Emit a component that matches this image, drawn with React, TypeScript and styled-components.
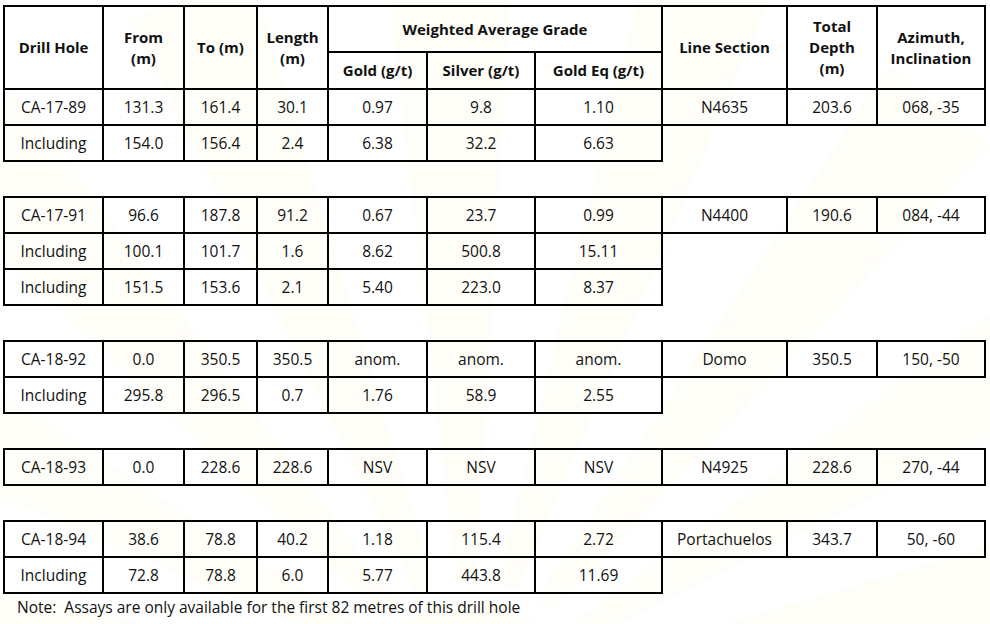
import React from "react";
import styled, { createGlobalStyle } from "styled-components";

const GlobalStyle = createGlobalStyle`
  html, body {
    margin: 0;
    padding: 0;
    background: #ffffff;
  }
  body {
    font-family: "Open Sans", "Noto Sans", "Liberation Sans", sans-serif;
    color: #111111;
  }
`;

type Row = string[];

interface Group {
  main: Row;
  including: Row[];
}

const groups: Group[] = [
  {
    main: ["CA-17-89", "131.3", "161.4", "30.1", "0.97", "9.8", "1.10", "N4635", "203.6", "068, -35"],
    including: [["Including", "154.0", "156.4", "2.4", "6.38", "32.2", "6.63"]],
  },
  {
    main: ["CA-17-91", "96.6", "187.8", "91.2", "0.67", "23.7", "0.99", "N4400", "190.6", "084, -44"],
    including: [
      ["Including", "100.1", "101.7", "1.6", "8.62", "500.8", "15.11"],
      ["Including", "151.5", "153.6", "2.1", "5.40", "223.0", "8.37"],
    ],
  },
  {
    main: ["CA-18-92", "0.0", "350.5", "350.5", "anom.", "anom.", "anom.", "Domo", "350.5", "150, -50"],
    including: [["Including", "295.8", "296.5", "0.7", "1.76", "58.9", "2.55"]],
  },
  {
    main: ["CA-18-93", "0.0", "228.6", "228.6", "NSV", "NSV", "NSV", "N4925", "228.6", "270, -44"],
    including: [],
  },
  {
    main: ["CA-18-94", "38.6", "78.8", "40.2", "1.18", "115.4", "2.72", "Portachuelos", "343.7", "50, -60"],
    including: [["Including", "72.8", "78.8", "6.0", "5.77", "443.8", "11.69"]],
  },
];

const colWidths = [99, 81, 73, 71, 99, 108, 127, 125, 90, 108];

const Page = styled.div`
  position: relative;
  width: 990px;
  height: 624px;
  overflow: hidden;
  background: #ffffff;
`;

const Watermark = styled.svg`
  position: absolute;
  left: 0;
  top: 0;
  width: 990px;
  height: 624px;
  pointer-events: none;
`;

const Content = styled.div`
  position: relative;
  padding: 5px 0 0 3px;
`;

const Table = styled.table`
  border-collapse: collapse;
  table-layout: fixed;
  width: 981px;
  font-size: 15.5px;
`;

const HeadCell = styled.th`
  border: 2px solid #000;
  padding: 0 3px;
  font-size: 15px;
  font-weight: 700;
  line-height: 21px;
  text-align: center;
  vertical-align: middle;
  color: #111;
`;

const HeadRow = styled.tr<{ $h: number }>`
  height: ${(p) => p.$h}px;
`;

const BodyRow = styled.tr`
  height: 36px;
`;

const Cell = styled.td`
  border: 2px solid #000;
  padding: 0 3px;
  text-align: center;
  vertical-align: middle;
  white-space: nowrap;
`;

const Spacer = styled.td`
  border: none;
  padding: 0;
`;

const Note = styled.div`
  font-size: 15.5px;
  padding: 3px 0 0 14px;
  line-height: 20px;
`;

function Rays() {
  const cx = 470;
  const cy = 700;
  const rays: string[] = [];
  for (let i = 0; i < 9; i++) {
    const a0 = Math.PI + (i * Math.PI) / 9 + 0.06;
    const a1 = a0 + 0.17;
    const r = 760;
    const p = (a: number, rr: number) => `${cx + Math.cos(a) * rr},${cy + Math.sin(a) * rr}`;
    rays.push(`${p(a0, 120)} ${p(a0, r)} ${p(a1, r)} ${p(a1, 120)}`);
  }
  return (
    <Watermark viewBox="0 0 990 624">
      {rays.map((pts, i) => (
        <polygon key={i} points={pts} fill="#f7eeb8" opacity={0.1} />
      ))}
      <circle cx={cx} cy={cy} r={100} fill="#f7eeb8" opacity={0.1} />
    </Watermark>
  );
}

export default function App() {
  return (
    <>
      <GlobalStyle />
      <Page>
        <Rays />
        <Content>
          <Table>
            <colgroup>
              {colWidths.map((w, i) => (
                <col key={i} style={{ width: w }} />
              ))}
            </colgroup>
            <thead>
              <HeadRow $h={46}>
                <HeadCell rowSpan={2}>Drill Hole</HeadCell>
                <HeadCell rowSpan={2}>
                  From
                  <br />
                  (m)
                </HeadCell>
                <HeadCell rowSpan={2}>To (m)</HeadCell>
                <HeadCell rowSpan={2}>
                  Length
                  <br />
                  (m)
                </HeadCell>
                <HeadCell colSpan={3}>Weighted Average Grade</HeadCell>
                <HeadCell rowSpan={2}>Line Section</HeadCell>
                <HeadCell rowSpan={2}>
                  Total
                  <br />
                  Depth
                  <br />
                  (m)
                </HeadCell>
                <HeadCell rowSpan={2}>
                  Azimuth,
                  <br />
                  Inclination
                </HeadCell>
              </HeadRow>
              <HeadRow $h={37}>
                <HeadCell>Gold (g/t)</HeadCell>
                <HeadCell>Silver (g/t)</HeadCell>
                <HeadCell>Gold Eq (g/t)</HeadCell>
              </HeadRow>
            </thead>
            <tbody>
              {groups.map((g, gi) => (
                <React.Fragment key={gi}>
                  {gi > 0 && (
                    <BodyRow>
                      <Spacer colSpan={10} />
                    </BodyRow>
                  )}
                  <BodyRow>
                    {g.main.map((v, i) => (
                      <Cell key={i}>{v}</Cell>
                    ))}
                  </BodyRow>
                  {g.including.map((r, ri) => (
                    <BodyRow key={ri}>
                      {r.map((v, i) => (
                        <Cell key={i}>{v}</Cell>
                      ))}
                      <Spacer colSpan={3} />
                    </BodyRow>
                  ))}
                </React.Fragment>
              ))}
            </tbody>
          </Table>
          <Note>Note:&nbsp; Assays are only available for the first 82 metres of this drill hole</Note>
        </Content>
      </Page>
    </>
  );
}
